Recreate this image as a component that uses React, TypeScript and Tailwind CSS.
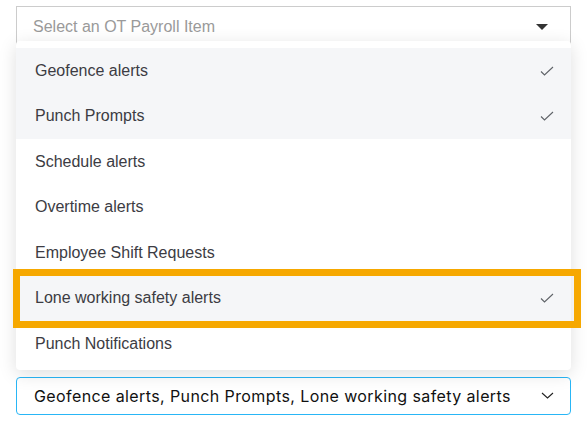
const options = [
  { label: "Geofence alerts", selected: true },
  { label: "Punch Prompts", selected: true },
  { label: "Schedule alerts", selected: false },
  { label: "Overtime alerts", selected: false },
  { label: "Employee Shift Requests", selected: false },
  { label: "Lone working safety alerts", selected: true, highlight: true },
  { label: "Punch Notifications", selected: false },
];

function Check() {
  return (
    <svg width="14" height="10" viewBox="0 0 14 10" fill="none">
      <path d="M1 5.5 L4.5 9 L13 1" stroke="#5f6368" strokeWidth="1.1" />
    </svg>
  );
}

export default function App() {
  return (
    <div className="min-h-[424px] w-[587px] bg-white px-4 pt-[6px] font-['Liberation_Sans',Arial,sans-serif]">
      {/* closed native-looking select behind the menu */}
      <div className="flex h-[40px] items-center justify-between border border-[#cccccc] bg-white pl-4 pr-[22px] text-[16px] text-[#9a9a9a]">
        <span className="mt-[1px]">Select an OT Payroll Item</span>
        <svg width="12" height="6" viewBox="0 0 12 6" className="mt-[1px]">
          <path d="M0 0 H12 L6 6 Z" fill="#333333" />
        </svg>
      </div>

      {/* open dropdown */}
      <div className="relative z-10 -mt-[5px] rounded-[4px] bg-white pt-[7px] pb-[3px] shadow-[0_4px_18px_rgba(0,0,0,0.13)]">
        {options.map((o) => (
          <div
            key={o.label}
            className={`relative flex h-[45.5px] items-center justify-between pl-[19px] pr-[17px] text-[16px] text-[#3c3c43] ${
              o.selected ? "bg-[#f5f6f8]" : ""
            }`}
          >
            <span>{o.label}</span>
            {o.selected && <Check />}
            {o.highlight && (
              <div className="pointer-events-none absolute -top-[7px] -bottom-[7px] -left-[3px] -right-[10px] border-[7px] border-[#f6a800]" />
            )}
          </div>
        ))}
      </div>

      {/* resulting multi-select value */}
      <div className="mt-[7px] flex h-[38px] items-center justify-between rounded-[4px] border border-[#29b6f6] bg-white pl-[17px] pr-[16px] font-['Inter',sans-serif] text-[16px] tracking-[0.4px] text-[#111111]">
        <span>Geofence alerts, Punch Prompts, Lone working safety alerts</span>
        <svg width="13" height="7" viewBox="0 0 13 7" fill="none">
          <path d="M1 1 L6.5 6 L12 1" stroke="#222222" strokeWidth="1.1" />
        </svg>
      </div>
    </div>
  );
}
